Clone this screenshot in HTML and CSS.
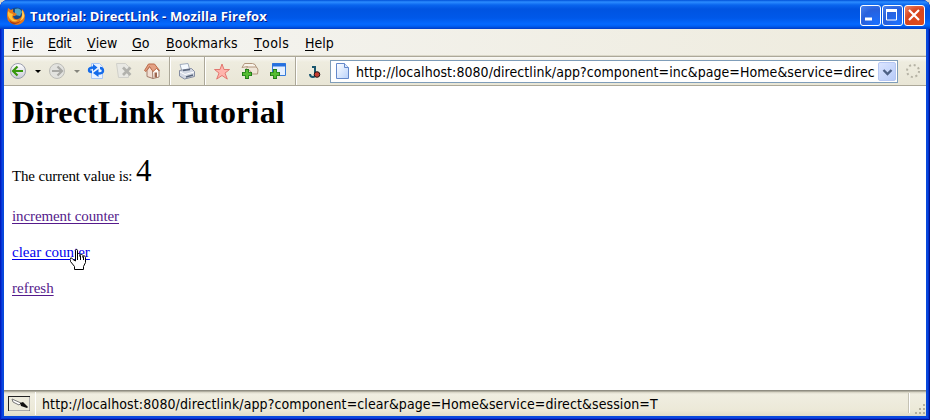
FILE: index.html
```html
<!DOCTYPE html>
<html lang="en">
<head>
<meta charset="utf-8">
<title>Tutorial: DirectLink</title>
<link rel="stylesheet" href="styles.css">
</head>
<body>
<div class="window">
  <header class="titlebar">
    <svg class="logo" width="20" height="20" viewBox="0 0 20 20">
      <circle cx="10.500" cy="9.500" r="8" fill="#16498a"/>
      <path d="M9 3q5-2 7 3l-2 4-5-1z" fill="#4fa6c8"/>
      <path d="M2 2l3 2 2-1 0 3 4 2-2 2-2 0q1 4 5 3 4-1 4-5l0-5q3 3 3 7 0 8-8 9Q1 18 1 10q0-3 1-8z" fill="#e77817"/>
      <path d="M2 5l2 2 3 1-1 3q2 4 6 3-3 3-7 0Q1 11 2 5z" fill="#ffc43c"/>
      <path d="M16 4q4 5 1 9l-3 2q3-4 2-11z" fill="#ffd05a"/>
      <path d="M3 14q5 5 12 1-4 4-8 3-3-1-4-4z" fill="#a83b10"/>
    </svg>
    <h2 class="caption">Tutorial: DirectLink - Mozilla Firefox</h2>
    <div class="controls">
      <span class="control"><svg width="19" height="19"><path d="M4 13h7" stroke="#fff" stroke-width="3"/></svg></span>
      <span class="control"><svg width="19" height="19"><path d="M3.500 4v10h10V4" fill="none" stroke="#fff"/><path d="M3 4.500h11" stroke="#fff" stroke-width="3"/></svg></span>
      <span class="control close"><svg width="19" height="19"><path d="M4 4l10 10M14 4L4 14" stroke="#fff" stroke-width="2.200"/></svg></span>
    </div>
  </header>
  <nav class="menu">
    <span class="m-file"><u>F</u>ile</span><span class="m-edit"><u>E</u>dit</span><span class="m-view"><u>V</u>iew</span><span class="m-go"><u>G</u>o</span><span class="m-book"><u>B</u>ookmarks</span><span class="m-tools"><u>T</u>ools</span><span class="m-help"><u>H</u>elp</span>
  </nav>
  <div class="toolbar">
    <svg class="tools" width="326" height="28" viewBox="4 57 326 28">
      <defs>
        <linearGradient id="disc" x1="0" y1="0" x2="0" y2="1"><stop offset="0" stop-color="#fff"/><stop offset="1" stop-color="#c9cbd6"/></linearGradient>
        <linearGradient id="paper" x1="0" y1="0" x2="1" y2="1"><stop offset="0" stop-color="#fff"/><stop offset="1" stop-color="#b9d2fb"/></linearGradient>
      </defs>
      <circle cx="18" cy="71" r="7.500" fill="url(#disc)" stroke="#9a9dad"/>
      <path d="M23 71H13.500M17.500 66.500L13 71l4.500 4.500" fill="none" stroke="#38970d" stroke-width="2.200"/>
      <path d="M35 70h6l-3 3z" fill="#000"/>
      <circle cx="57" cy="71" r="7.500" fill="#e2e2df" stroke="#bdbdb8"/>
      <path d="M52 71h9.500M57.500 66.500L62 71l-4.500 4.500" fill="none" stroke="#a8a8a5" stroke-width="2.200"/>
      <path d="M74 70h6l-3 3z" fill="#85857d"/>
      <path d="M91.500 63.500h8l3 3v12h-11z" fill="#eaf2ff" stroke="#a9c6f5"/>
      <path d="M94 67.500q-5 0-5 2.500 0 2 3 2M98 73.500q5 0 5-2.500 0-3-3-3" fill="none" stroke="#146bea" stroke-width="2.400"/>
      <path d="M93 64l4.500 3.500L93 71zM98.500 69v8L93 73z" fill="#146bea"/>
      <path d="M116.500 63.500h9l3 3v11h-10z" fill="#e8e8e3" stroke="#d0d0ca"/>
      <path d="M123 67.500l7.500 7.500M130.500 67.500L123 75" stroke="#b2b2ad" stroke-width="2.700"/>
      <path d="M147 70.500l2.500-4 3.500 4v8l-6-2z" fill="#f2ded2" stroke="#a47d6b"/>
      <path d="M152.500 71l3.500-3 3 3v6l-6 1.500z" fill="#fffaf4" stroke="#a47d6b"/>
      <path d="M144.500 70.500l4-6.500h6l5 6.500-3-2-3.500 3-3.500-5-3.500 5z" fill="#e3a183" stroke="#bb6b4a"/>
      <path d="M154.500 72.500h2.500v5h-2.500z" fill="#9f674f"/>
      <path d="M169.500 57v28M204.500 57v28M295.500 57v28" stroke="#aca899"/>
      <path d="M170.500 57v28M205.500 57v28M296.500 57v28" stroke="#fff"/>
      <path d="M180 64.500l8-1 2 7-8 1z" fill="#f5faff" stroke="#9faabb"/>
      <path d="M179.500 70.500l12-2 3 3v5l-10 2.500-5-3z" fill="#d4d9e4" stroke="#858da1"/>
      <path d="M180 72l5 2.500 9-2.500" fill="none" stroke="#fff"/>
      <path d="M183 70.500l7-1M186 77l7-2" stroke="#58657b" stroke-width="1.500"/>
      <path d="M222 64l2 5.500h5.500l-4.500 3.600 2.300 6-5.300-3.600-5.300 3.600 2.300-6-4.500-3.600h5.500z" fill="#ffb4ac" stroke="#e2776f"/>
      <path d="M242 67.500l2.500-4h8q3 0 4 4v2h-8l-1-3z" fill="#f9f3e9" stroke="#b1967e"/>
      <path d="M245.500 69.500l2-2.500h8q2 0 2.500 3l-.5 4h-6l-1-3z" fill="#efe5d7" stroke="#b1967e"/>
      <path d="M272.500 63.500h13v12h-13z" fill="#e4efff" stroke="#347bd9"/>
      <path d="M272 65h14" stroke="#2670df" stroke-width="3"/>
      <path d="M247 69v10M242 74h10M275 69v10M270 74h10" stroke="#227b19" stroke-width="4"/>
      <path d="M247 70v8M243 74h8M275 70v8M271 74h8" stroke="#55bd32" stroke-width="2.400"/>
      <path d="M312 67h3v8q0 2-2 2-3 0-3-3" fill="none" stroke="#19566e" stroke-width="2"/>
      <circle cx="317" cy="74.500" r="2.800" fill="#c63c32" stroke="#221717"/>
    </svg>
    <div class="address">
      <svg class="page-icon" width="22" height="20"><path d="M5.500 2.500h8l4 4v11h-12z" fill="url(#paper)" stroke="#6488ca"/><path d="M13.500 2.500v4h4" fill="#d9e8ff" stroke="#6488ca"/></svg>
      <span class="url">http://localhost:8080/directlink/app?component=inc&amp;page=Home&amp;service=direc</span>
      <span class="dropdown"><svg width="17" height="18"><path d="M4.500 7l4 4 4-4" fill="none" stroke="#4d6185" stroke-width="2.400"/></svg></span>
    </div>
    <svg class="throbber" width="28" height="28"><circle cx="15" cy="14" r="6" fill="none" stroke="#b5b2a4" stroke-width="2" stroke-dasharray="2 2.712"/></svg>
  </div>
  <main class="content">
    <h1>DirectLink Tutorial</h1>
    <p class="value"><span class="label">The current value is: </span><span class="number">4</span></p>
    <p class="link"><a class="visited inc">increment counter</a></p>
    <p class="link"><a class="clear">clear counter</a></p>
    <p class="link"><a class="visited refresh">refresh</a></p>
    <svg class="pointer" width="18" height="23" viewBox="0 0 18 23"><path d="M5.500 13V2.500q0-1 1-1t1 1v6-2q0-1 1-1t1.500 1v2-1q.5-1 1.500-1t1.500 1v2-1q.5-1 1.500-.5t1 1.500v5l-2 4v3h-9v-3l-4-5q-1-3 0-3.500 1.500-.5 2.500 1.500z" fill="#fff" stroke="#000"/><path d="M7.500 8v4M10.500 8v4M13.500 9v3" stroke="#000"/></svg>
  </main>
  <footer class="status">
    <svg class="badge" width="22" height="15"><rect x=".5" y=".5" width="21" height="14" fill="#eceadb" stroke="#222"/><path d="M1 14.500h20.500V1" fill="none" stroke="#aaa"/><path d="M4 3l9 4-2 2-6-3z" fill="#fff" stroke="#777"/><path d="M12 7l3-1 5 5-1 1-6-2z" fill="#111"/></svg>
    <span class="status-text">http://localhost:8080/directlink/app?component=clear&amp;page=Home&amp;service=direct&amp;session=T</span>
    <svg class="grip" width="18" height="24"><path d="M.5 2v20" stroke="#c5c2b4"/><path d="M1.500 2v20" stroke="#fff"/><path d="M15 13h2v2h-2zM11 17h2v2h-2zM15 17h2v2h-2zM7 21h2v2H7zM11 21h2v2h-2zM15 21h2v2h-2z" fill="#b3af9d"/></svg>
  </footer>
</div>
</body>
</html>
```
FILE: styles.css
```css
* { box-sizing: border-box; }
body { margin: 0; background: #d9d8cd; overflow: hidden; font-family: "DejaVu Sans Condensed", "DejaVu Sans", sans-serif; color: #000; }
.window { width: 930px; height: 420px; padding: 0 4px 4px; display: flex; flex-direction: column; background: #0848dc; border-radius: 8px 8px 0 0; box-shadow: inset 1px 0 #001fbc, inset -1px -1px #00138c, inset 2px -2px #0831d9, inset -2px 0 #0030ce; overflow: hidden; }
.titlebar { height: 29px; flex: none; display: flex; align-items: center; margin: 0 -4px; padding: 2px 5px 0 6px; background: linear-gradient(#0050d8 0, #2b8cff 2px, #0965ee 5px, #0054e1 9px, #0058e9 18px, #0469ff 24px, #0060f4 26px, #003cc5 29px); }
.logo { flex: none; }
.caption { margin: 0 0 0 4px; font: bold 13px "Open Sans", sans-serif; letter-spacing: 0.13px; color: #fff; text-shadow: 1px 1px #0a1883; white-space: nowrap; }
.controls { margin-left: auto; display: flex; gap: 1px; }
.control { width: 21px; height: 21px; border: 1px solid #fff; border-radius: 3px; background: radial-gradient(circle at 80% 90%, #1b70ff, #2860dc 60%, #4a84ee); overflow: hidden; }
.control svg { display: block; }
.close { background: radial-gradient(circle at 80% 90%, #dd4a1b, #d7451f 60%, #ee8c70); }
.menu { height: 28px; flex: none; display: flex; align-items: center; padding-left: 8px; background: linear-gradient(90deg, #f5f5f3, #eeebdd); border-bottom: 1px solid #aca899; box-shadow: inset 0 -1px #dbd8c9; font-size: 14px; line-height: 16px; }
.menu span { white-space: nowrap; }
.menu u { display: inline-block; height: 16px; border-bottom: 1px solid #000; text-decoration: none; }
.m-file { width: 36px; letter-spacing: -0.2px; }
.m-edit { width: 39px; letter-spacing: -0.3px; }
.m-view { width: 45px; }
.m-go { width: 34px; }
.m-book { width: 88px; letter-spacing: 0.15px; }
.m-tools { width: 51px; letter-spacing: 0.4px; }
.toolbar { height: 29px; flex: none; display: flex; align-items: center; background: linear-gradient(#faf9f6, #eeecdf 5px, #e9e6d6); border-bottom: 1px solid #aca899; }
.tools { flex: none; }
.address { width: 568px; height: 23px; flex: none; display: flex; align-items: center; background: #fff; border: 1px solid #7f9db9; padding-right: 1px; }
.page-icon { flex: none; }
.url { flex: 1; min-width: 0; padding-top: 1px; white-space: nowrap; font-size: 14px; letter-spacing: 0.06px; margin-left: 3px; }
.dropdown { width: 18px; height: 19px; flex: none; border-radius: 2px; border: 1px solid #b6c7f4; background: linear-gradient(135deg, #dbe5ff, #b7cbf8); }
.dropdown svg { display: block; }
.throbber { flex: none; }
.content { position: relative; flex: 1; min-height: 0; padding: 8px; background: #fff; font: 15px/18px "Liberation Serif", serif; }
h1 { margin: 0; padding-top: 1px; font-size: 32px; line-height: 35px; letter-spacing: 0.22px; white-space: nowrap; }
.value { margin: 22px 0 0; height: 37px; line-height: 37px; }
.label { letter-spacing: -0.16px; }
.number { font-size: 31px; }
.link { margin: 18px 0 0; height: 18px; }
.visited { color: #551a8b; }
.inc { letter-spacing: -0.1px; }
.clear { color: #0000ee; }
.link a { text-decoration: underline; text-underline-offset: 2px; text-decoration-thickness: 1px; text-decoration-skip-ink: none; }
.pointer { position: absolute; left: 66px; top: 162px; }
.status { height: 26px; flex: none; display: flex; align-items: center; padding-left: 4px; background: linear-gradient(#8f8d81 0, #8f8d81 1px, #d2cfbf 2px, #f0eee1 4px, #ece9d8 20px, #dedbc9); font-size: 14px; }
.badge { flex: none; }
.status-text { margin-left: 5px; padding: 2px 0 0 6px; border-left: 1px solid #fff; line-height: 21px; letter-spacing: 0.105px; white-space: nowrap; }
.grip { margin-left: auto; flex: none; }
```
